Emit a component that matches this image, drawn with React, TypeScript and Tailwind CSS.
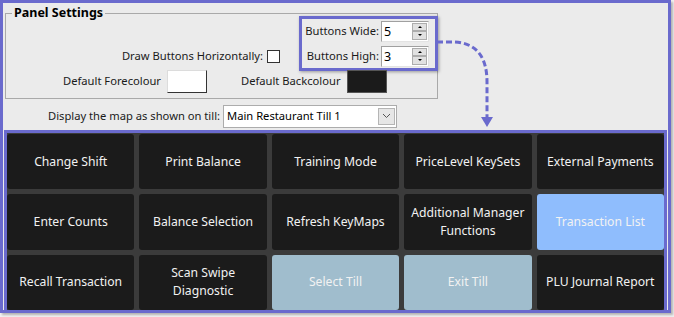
import React from "react";

const tiles = [
  { lines: ["Change Shift"], tone: "dark" },
  { lines: ["Print Balance"], tone: "dark" },
  { lines: ["Training Mode"], tone: "dark" },
  { lines: ["PriceLevel KeySets"], tone: "dark" },
  { lines: ["External Payments"], tone: "dark" },
  { lines: ["Enter Counts"], tone: "dark" },
  { lines: ["Balance Selection"], tone: "dark" },
  { lines: ["Refresh KeyMaps"], tone: "dark" },
  { lines: ["Additional Manager", "Functions"], tone: "dark" },
  { lines: ["Transaction List"], tone: "blue" },
  { lines: ["Recall Transaction"], tone: "dark" },
  { lines: ["Scan Swipe", "Diagnostic"], tone: "dark" },
  { lines: ["Select Till"], tone: "slate" },
  { lines: ["Exit Till"], tone: "slate" },
  { lines: ["PLU Journal Report"], tone: "dark" },
];

const toneClass: Record<string, string> = {
  dark: "bg-[#1b1b1b]",
  blue: "bg-[#8fbdfd]",
  slate: "bg-[#a0bdcd]",
};

function Spinner({ value }: { value: string }) {
  return (
    <div className="flex w-[48px] h-[21px] bg-white border border-t-[#a0a0a0] border-l-[#a0a0a0] border-r-[#e3e3e3] border-b-[#e3e3e3]">
      <div className="flex-1 pl-[2px] text-[12.5px] leading-[19px] text-black">{value}</div>
      <div className="flex flex-col w-[16px] py-[1px] pr-[1px]">
        <div className="flex-1 flex items-center justify-center bg-[#e1e1e1] border border-[#adadad]">
          <div className="w-0 h-0 border-l-[2px] border-r-[2px] border-b-[2px] border-l-transparent border-r-transparent border-b-black" />
        </div>
        <div className="flex-1 flex items-center justify-center bg-[#e1e1e1] border border-[#adadad]">
          <div className="w-0 h-0 border-l-[2px] border-r-[2px] border-t-[2px] border-l-transparent border-r-transparent border-t-black" />
        </div>
      </div>
    </div>
  );
}

export default function App() {
  return (
    <div
      className="relative w-[674px] h-[317px] bg-[#f0f0f0] text-[#1a1a1a] text-[11.2px] whitespace-nowrap"
      style={{ fontFamily: '"Noto Sans", "Segoe UI", sans-serif' }}
    >
      <div className="w-[671px] h-[313px] border-[3px] border-[#6a6acd] bg-[#ebebeb] shadow-[2px_2px_2px_rgba(0,0,0,0.25)] flex flex-col">
        {/* Panel Settings group */}
        <div className="relative ml-[2px] mt-[10px] w-[433px] h-[86px] border border-[#a9a9a9]">
          <div className="absolute left-[6px] -top-[10px] px-[2px] bg-[#ebebeb] font-bold text-[12.5px] leading-[18px] text-black">
            Panel Settings
          </div>
          <div className="flex flex-col">
            <div className="flex justify-end items-end h-[57px] pt-[2px]">
              <div className="flex items-center gap-[4px] mb-[8px] mr-[19px]">
                <span className="leading-[14px]">Draw Buttons Horizontally:</span>
                <div className="w-[13px] h-[13px] bg-white border border-[#333]" />
              </div>
              <div className="h-[55px] w-[139px] border-[3px] border-[#6a6acd] shadow-[1px_1px_3px_rgba(0,0,0,0.35)] flex flex-col justify-center gap-[4px] pr-[6px] mr-[-1px]">
                <div className="flex items-center justify-end gap-[2px]">
                  <span>Buttons Wide:</span>
                  <Spinner value="5" />
                </div>
                <div className="flex items-center justify-end gap-[2px]">
                  <span>Buttons High:</span>
                  <Spinner value="3" />
                </div>
              </div>
            </div>
            <div className="flex items-center h-[24px] pl-[57px] -mt-[2px]">
              <span>Default Forecolour</span>
              <div className="ml-[6px] w-[40px] h-[23px] bg-white border border-[#dcdcdc] border-r-[#333] border-b-[#333]" />
              <span className="ml-[34px]">Default Backcolour</span>
              <div className="ml-auto mr-[50px] w-[40px] h-[23px] bg-[#1b1b1b] border border-[#555]" />
            </div>
          </div>
        </div>

        {/* till selector */}
        <div className="flex items-center mt-[5px] pl-[45px] h-[24px]">
          <span>Display the map as shown on till:</span>
          <div className="ml-auto mr-[271px] flex items-center w-[174px] h-[23px] bg-white border border-[#acacac]">
            <span className="flex-1 pl-[3px] text-black">Main Restaurant Till 1</span>
            <div className="w-[17px] h-[17px] mr-[1px] flex items-center justify-center bg-[#e6e6e6] border border-[#b5b5b5]">
              <svg width="9" height="6" viewBox="0 0 9 6">
                <path d="M1 1 L4.5 4.5 L8 1" fill="none" stroke="#555" strokeWidth="1" />
              </svg>
            </div>
          </div>
        </div>

        {/* button grid */}
        <div className="mt-[2px] ml-[1px] w-[663px] flex-1 border-[3px] border-b-0 border-[#6a6acd] bg-[#3b3b3b] grid grid-cols-5 grid-rows-3 gap-[5px] pt-[1px]">
          {tiles.map((t, i) => (
            <div
              key={i}
              className={`${toneClass[t.tone]} rounded-[3px] flex flex-col items-center justify-center text-[#f2f2f2] text-[12.2px] leading-[18px] text-center`}
            >
              {t.lines.map((l, j) => (
                <span key={j}>{l}</span>
              ))}
            </div>
          ))}
        </div>
      </div>

      {/* dashed annotation arrow */}
      <svg className="absolute left-0 top-0 pointer-events-none" width="674" height="317">
        <path
          d="M437 42 L455 42 Q487 44 487 82 L487 118"
          fill="none"
          stroke="#6a6acd"
          strokeWidth="3"
          strokeDasharray="6 3"
        />
        <polygon points="481,117 493,117 487,127" fill="#6a6acd" />
      </svg>
    </div>
  );
}
